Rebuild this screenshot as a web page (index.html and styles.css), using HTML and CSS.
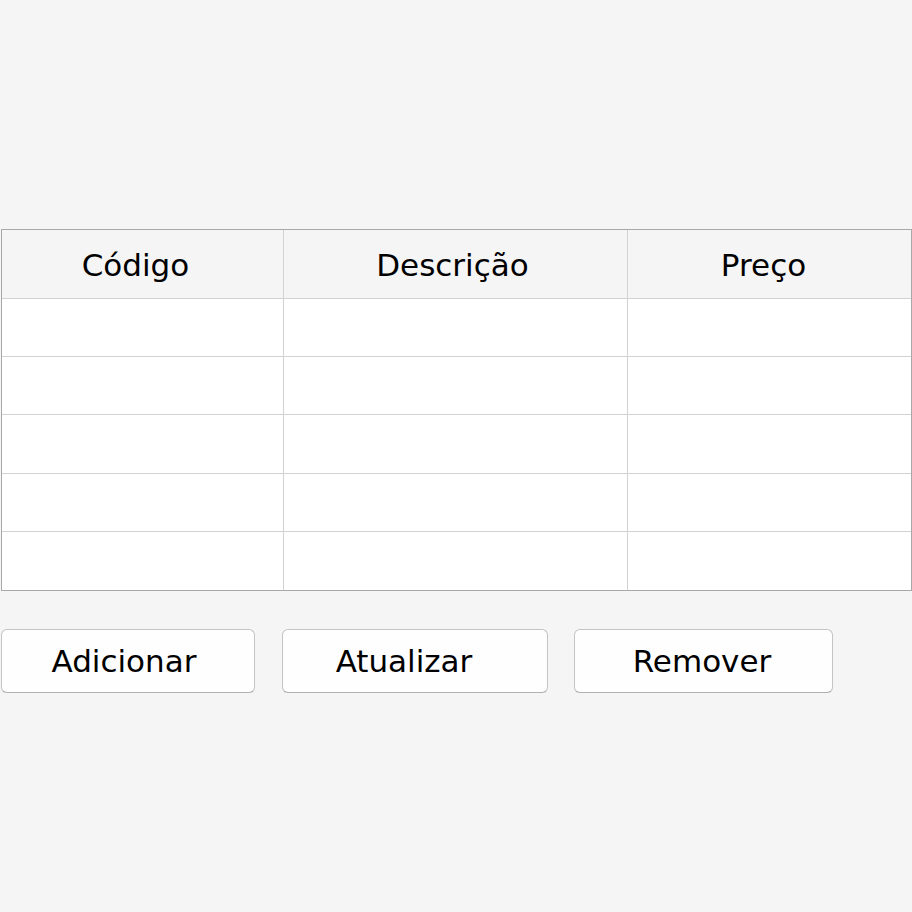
FILE: index.html
```html
<!DOCTYPE html>
<html>
<head>
<meta charset="utf-8">
<link rel="stylesheet" href="styles.css">
</head>
<body>
<div class="page">
  <div class="table">
    <div class="cell head c1">Código</div>
    <div class="cell head c2">Descrição</div>
    <div class="cell head c3">Preço</div>
    <div class="cell c1"></div><div class="cell c2"></div><div class="cell c3"></div>
    <div class="cell c1"></div><div class="cell c2"></div><div class="cell c3"></div>
    <div class="cell c1"></div><div class="cell c2"></div><div class="cell c3"></div>
    <div class="cell c1"></div><div class="cell c2"></div><div class="cell c3"></div>
    <div class="cell c1 last"></div><div class="cell c2 last"></div><div class="cell c3 last"></div>
  </div>
  <div class="buttons">
    <button class="btn b1">Adicionar</button>
    <button class="btn b2">Atualizar</button>
    <button class="btn b3">Remover</button>
  </div>
</div>
</body>
</html>
```
FILE: styles.css
```css
html, body {
  margin: 0;
  padding: 0;
  background: #f5f5f5;
  font-family: "DejaVu Sans", sans-serif;
}
.page {
  padding: 229px 0 0 1px;
}
.table {
  width: 909px;
  border: 1px solid #a8a8a8;
  display: grid;
  grid-template-columns: 282px 344px 1fr;
  grid-template-rows: 69px 58px 58px 59px 58px 58px;
  background: #fff;
}
.cell {
  border-bottom: 1px solid #d2d2d2;
  border-right: 1px solid #d2d2d2;
  box-sizing: border-box;
}
.cell.c3 { border-right: none; }
.cell.last { border-bottom: none; }
.head {
  background: #f5f5f5;
  display: flex;
  align-items: center;
  justify-content: center;
  font-size: 31px;
  color: #000;
  padding-top: 1px;
}
.head.c1 { padding-right: 14px; }
.head.c2 { padding-right: 6px; }
.head.c3 { padding-right: 12px; }
.buttons {
  display: flex;
  margin-top: 38px;
}
.btn {
  height: 64px;
  box-sizing: border-box;
  border: 1px solid #c4c4c4;
  border-bottom-color: #b0b0b0;
  border-radius: 6px;
  background: #fefefe;
  font-family: "DejaVu Sans", sans-serif;
  font-size: 31px;
  color: #000;
  padding: 0;
  box-shadow: 0 1px 0 rgba(0,0,0,0.06);
}
.b1 { width: 254px; padding-right: 8px; }
.b2 { width: 266px; margin-left: 27px; padding-right: 22px; }
.b3 { width: 259px; margin-left: 26px; padding-right: 3px; }
```
